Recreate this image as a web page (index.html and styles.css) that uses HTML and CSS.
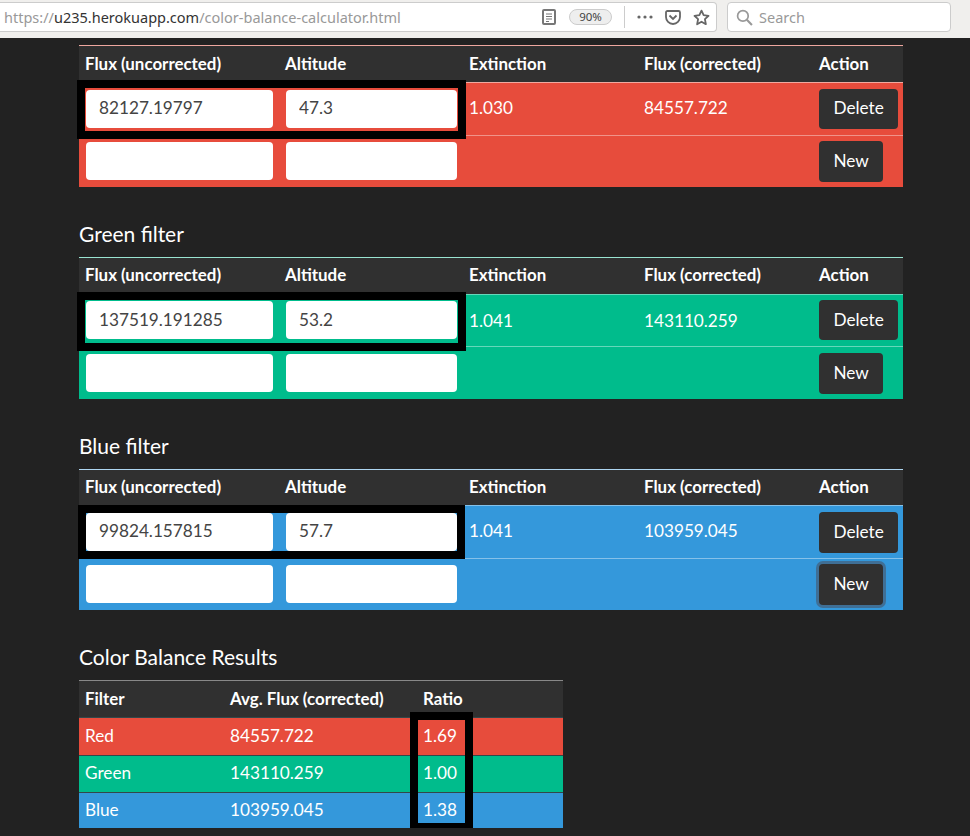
FILE: index.html
```html
<!DOCTYPE html>
<html lang="en">
<head>
    <meta charset="UTF-8">
    <title>Color Balance Calculator</title>
    <link rel="stylesheet" href="styles.css">
</head>
<body>
    <header class="toolbar">
        <div class="urlbar">
            <span class="url"><span class="url-dim">https://</span>u235.herokuapp.com<span class="url-dim">/color-balance-calculator.html</span></span>
            <svg class="icon-reader" width="14" height="16" viewBox="0 0 14 16">
                <rect x="1" y="1" width="12" height="14" rx="1" fill="none" stroke="#777" stroke-width="2"/>
                <path d="M4 5h6M4 7.5h6M4 10h6M4 12.5h3" stroke="#777" stroke-width="1"/>
            </svg>
            <span class="zoom-pill">90%</span>
            <span class="urlbar-sep"></span>
            <svg class="icon-dots" width="16" height="4" viewBox="0 0 16 4">
                <circle cx="2" cy="2" r="1.6" fill="#666"/>
                <circle cx="8" cy="2" r="1.6" fill="#666"/>
                <circle cx="14" cy="2" r="1.6" fill="#666"/>
            </svg>
            <svg class="icon-pocket" width="16" height="15" viewBox="0 0 16 15">
                <path d="M1 2.5C1 1.6 1.6 1 2.5 1h11c.9 0 1.5.6 1.5 1.5V7a7 7 0 0 1-14 0z" fill="none" stroke="#666" stroke-width="1.8"/>
                <path d="M4.5 5.5 8 9l3.5-3.5" fill="none" stroke="#666" stroke-width="1.8"/>
            </svg>
            <svg class="icon-star" width="17" height="17" viewBox="0 0 16 16">
                <path d="M8 1.5l2 4.3 4.6.6-3.4 3.2.9 4.7L8 12l-4.1 2.3.9-4.7L1.4 6.4 6 5.8z" fill="none" stroke="#666" stroke-width="1.7" stroke-linejoin="round"/>
            </svg>
        </div>
        <div class="searchbar">
            <svg width="17" height="17" viewBox="0 0 16 16">
                <circle cx="6.5" cy="6.5" r="5" fill="none" stroke="#999" stroke-width="1.6"/>
                <path d="M10.2 10.2 15 15" stroke="#999" stroke-width="2"/>
            </svg>
            <span>Search</span>
        </div>
    </header>

    <main class="content">
        <section class="filter">
            <table class="data red">
                <thead>
                    <tr><th>Flux (uncorrected)</th><th>Altitude</th><th>Extinction</th><th>Flux (corrected)</th><th>Action</th></tr>
                </thead>
                <tbody>
                    <tr>
                        <td><input class="field field-flux" value="82127.19797"></td>
                        <td><input class="field field-alt" value="47.3"></td>
                        <td class="val">1.030</td>
                        <td class="val">84557.722</td>
                        <td><button class="btn">Delete</button></td>
                    </tr>
                    <tr class="new-row">
                        <td><input class="field field-flux"></td>
                        <td><input class="field field-alt"></td>
                        <td></td>
                        <td></td>
                        <td><button class="btn">New</button></td>
                    </tr>
                </tbody>
            </table>
            <div class="mark mark-inputs"></div>
        </section>

        <section class="filter">
            <h2>Green filter</h2>
            <table class="data green">
                <thead>
                    <tr><th>Flux (uncorrected)</th><th>Altitude</th><th>Extinction</th><th>Flux (corrected)</th><th>Action</th></tr>
                </thead>
                <tbody>
                    <tr>
                        <td><input class="field field-flux" value="137519.191285"></td>
                        <td><input class="field field-alt" value="53.2"></td>
                        <td class="val">1.041</td>
                        <td class="val">143110.259</td>
                        <td><button class="btn">Delete</button></td>
                    </tr>
                    <tr class="new-row">
                        <td><input class="field field-flux"></td>
                        <td><input class="field field-alt"></td>
                        <td></td>
                        <td></td>
                        <td><button class="btn">New</button></td>
                    </tr>
                </tbody>
            </table>
            <div class="mark mark-inputs"></div>
        </section>

        <section class="filter">
            <h2>Blue filter</h2>
            <table class="data blue">
                <thead>
                    <tr><th>Flux (uncorrected)</th><th>Altitude</th><th>Extinction</th><th>Flux (corrected)</th><th>Action</th></tr>
                </thead>
                <tbody>
                    <tr>
                        <td><input class="field field-flux" value="99824.157815"></td>
                        <td><input class="field field-alt" value="57.7"></td>
                        <td class="val">1.041</td>
                        <td class="val">103959.045</td>
                        <td><button class="btn">Delete</button></td>
                    </tr>
                    <tr class="new-row">
                        <td><input class="field field-flux"></td>
                        <td><input class="field field-alt"></td>
                        <td></td>
                        <td></td>
                        <td><button class="btn btn-focus">New</button></td>
                    </tr>
                </tbody>
            </table>
            <div class="mark mark-inputs mark-blue"></div>
        </section>

        <section class="filter">
            <h2>Color Balance Results</h2>
            <table class="results">
                <thead>
                    <tr><th>Filter</th><th>Avg. Flux (corrected)</th><th>Ratio</th></tr>
                </thead>
                <tbody>
                    <tr class="red"><td>Red</td><td>84557.722</td><td>1.69</td></tr>
                    <tr class="green"><td>Green</td><td>143110.259</td><td>1.00</td></tr>
                    <tr class="blue"><td>Blue</td><td>103959.045</td><td>1.38</td></tr>
                </tbody>
            </table>
            <div class="mark mark-ratio"></div>
        </section>
    </main>
</body>
</html>
```

FILE: styles.css
```css
* {
    box-sizing: border-box;
}

body {
    margin: 0;
    background: #222;
    color: #fff;
    font-family: Lato, sans-serif;
    font-size: 17.2px;
    overflow: hidden;
}

/* browser chrome */
.toolbar {
    height: 38px;
    padding: 2px 19px 0 0;
    background: #f0efed;
    display: flex;
    align-items: flex-start;
    gap: 10px;
    font-family: "Noto Sans", sans-serif;
}

.urlbar {
    flex: 1;
    height: 30px;
    background: #fff;
    border: 1px solid #ccc;
    border-left: none;
    border-radius: 0 4px 4px 0;
    display: flex;
    align-items: center;
    padding: 0 6px 0 4px;
}

.url {
    flex: 1;
    font-size: 14.5px;
    color: #333;
    white-space: nowrap;
}

.url-dim {
    color: #999;
}

.icon-reader {
    margin-right: 13px;
}

.zoom-pill {
    width: 43px;
    height: 16px;
    border: 1px solid #ccc;
    border-radius: 8px;
    background: #eee;
    color: #444;
    font-size: 11.5px;
    line-height: 14px;
    text-align: center;
}

.urlbar-sep {
    width: 1px;
    height: 22px;
    background: #ccc;
    margin: 0 12px;
}

.icon-dots {
    margin-right: 12px;
}

.icon-pocket {
    margin-right: 12px;
}

.searchbar {
    width: 224px;
    height: 30px;
    background: #fff;
    border: 1px solid #ccc;
    border-radius: 4px;
    display: flex;
    align-items: center;
    gap: 6px;
    padding-left: 8px;
    font-size: 14.5px;
    color: #999;
}

/* page */
.content {
    width: 824px;
    margin-left: 79px;
    padding-top: 7px;
}

.filter {
    position: relative;
}

h2 {
    margin: 35px 0 11px;
    font-size: 21px;
    font-weight: 400;
    line-height: 24px;
}

table {
    border-collapse: separate;
    border-spacing: 0;
    table-layout: fixed;
}

.data {
    width: 824px;
}

.data th:nth-child(1) { width: 200px; }
.data th:nth-child(2) { width: 184px; }
.data th:nth-child(3) { width: 175px; }
.data th:nth-child(4) { width: 175px; }
.data th:nth-child(5) { width: 90px; }

th {
    height: 38px;
    padding: 0 6px 3px;
    background: #303030;
    border-top: 1px solid #ddd;
    border-bottom: 1px solid #ddd;
    text-align: left;
    font-size: 16.9px;
    font-weight: 700;
}

td {
    padding: 6px;
}

.data td:first-child {
    padding-left: 7px;
}

.data .val {
    padding-top: 4px;
    padding-bottom: 8px;
}

.new-row td {
    padding-top: 5px;
    padding-bottom: 5px;
    border-top: 1px solid rgba(255, 255, 255, 0.4);
    vertical-align: top;
}

.red { background: #e74c3c; }
.green { background: #00bc8c; }
.blue { background: #3498db; }

/* header rules pick up the tint of the table */
.red th {
    padding-bottom: 2px;
    border-top-color: #eea79f;
    border-bottom-color: #f1a9a0;
}

.green th {
    border-top-color: #99e4d1;
    border-bottom-color: #66d7ba;
}

.blue th {
    height: 37px;
    border-top-color: #aed6f1;
    border-bottom-color: #85c1e9;
}

/* the rows of the three tables differ by a pixel */
.green tbody tr:first-child td {
    padding-top: 5px;
}

.green tbody tr:first-child .val {
    padding-bottom: 6px;
}

.green tbody tr:first-child .field,
.green tbody tr:first-child .btn {
    padding-bottom: 1px;
}

.green .new-row td {
    padding-top: 6px;
}

.blue tbody tr:first-child td:last-child {
    padding-bottom: 5px;
}

.blue tbody tr:first-child .btn {
    height: 41px;
}

.field {
    display: block;
    height: 38px;
    padding: 0 13px 3px;
    margin: 1px 0;
    background: #fff;
    border: none;
    border-radius: 4px;
    color: #444;
    font-family: Lato, sans-serif;
    font-size: 17.2px;
}

.field-flux {
    width: 187px;
}

.field-alt {
    width: 171px;
    margin-left: 1px;
}

.btn {
    display: block;
    height: 40px;
    padding: 0 14.5px 3px;
    background: #303030;
    border: none;
    border-radius: 4px;
    color: #fff;
    font-family: Lato, sans-serif;
    font-size: 17.2px;
}

.new-row .btn {
    height: 41px;
}

.btn-focus {
    box-shadow: 0 0 0 3px #3f6f96;
}

.results {
    width: 484px;
}

.results th:nth-child(1) { width: 145px; }
.results th:nth-child(2) { width: 193px; }
.results th:nth-child(3) { width: 146px; }

.results th {
    padding-bottom: 2px;
    border-top-color: #888;
    border-bottom-color: #33474a;
}

.results td {
    height: 37px;
    padding: 0 6px 3px;
}

.results tr:last-child td {
    height: 36px;
}

.results tr + tr td {
    border-top: 1px solid #33474a;
}

/* black marks drawn on top of the screenshot */
.mark {
    position: absolute;
    border: 8px solid #000;
    pointer-events: none;
}

.mark-inputs {
    left: -2px;
    bottom: 48px;
    width: 389px;
    height: 59px;
}

.mark-blue {
    left: -1px;
    bottom: 51px;
    width: 387px;
    height: 54px;
}

.mark-ratio {
    left: 331px;
    bottom: -3px;
    width: 63px;
    height: 119px;
}
```
